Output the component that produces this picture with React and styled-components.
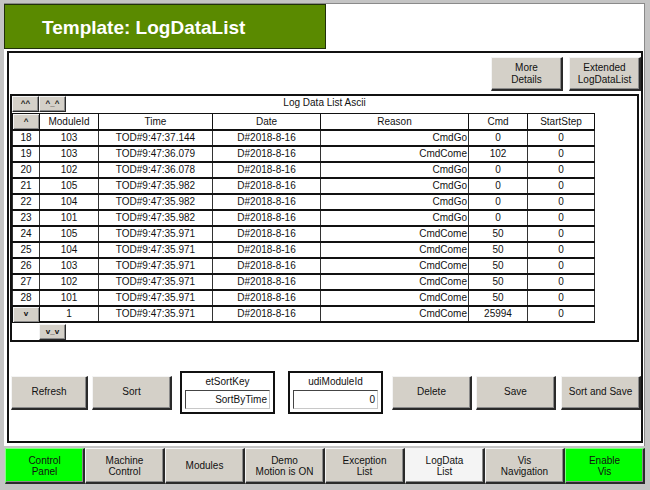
import React from 'react'
import styled, { createGlobalStyle } from 'styled-components'

const GlobalStyle = createGlobalStyle`
  html, body {
    margin: 0;
    padding: 0;
    background: #c4c4c4;
  }
  body {
    font-family: "Liberation Sans", Arial, sans-serif;
    color: #111;
  }
`

const Screen = styled.div`
  width: 650px;
  height: 490px;
  box-sizing: border-box;
  background: #c4c4c4;
  padding: 3px 5px 0 4px;
  display: flex;
  flex-direction: column;
  overflow: hidden;
`

const Workspace = styled.div`
  height: 443px;
  box-sizing: border-box;
  background: #fff;
  border-right: 1px solid #8a8a8a;
  border-top: 1px solid #8a8a8a;
  display: flex;
  flex-direction: column;
`

const Header = styled.div`
  width: 322px;
  height: 45px;
  box-sizing: border-box;
  background: #5a8a00;
  border: 1px solid #20300a;
  display: flex;
  align-items: center;
  padding: 2px 0 0 37px;
`

const Title = styled.h1`
  margin: 0;
  font-size: 19px;
  font-weight: bold;
  color: #fff;
`

const MainPanel = styled.div`
  margin: 2px 1px 0 3px;
  height: 392px;
  box-sizing: border-box;
  border: 2px solid #111;
  display: flex;
  flex-direction: column;
  padding-top: 4px;
`

const TopBar = styled.div`
  display: flex;
  justify-content: flex-end;
  gap: 6px;
`

const Button = styled.button`
  width: ${p => p.$w || 80}px;
  height: ${p => p.$h || 34}px;
  box-sizing: border-box;
  margin: 0;
  margin-left: ${p => p.$ml || 0}px;
  padding: 0;
  background: #d4d0c8;
  border-top: 1px solid #f4f4f4;
  border-left: 1px solid #f4f4f4;
  border-right: 2px solid #2a2a2a;
  border-bottom: 2px solid #2a2a2a;
  box-shadow: inset -1px -1px 0 #8a8a8a;
  font-family: "Liberation Sans", Arial, sans-serif;
  font-size: 10px;
  line-height: 12px;
  color: #111;
  text-align: center;
  flex-shrink: 0;
`

const TinyButton = styled.button`
  display: block;
  width: 27px;
  height: 16px;
  box-sizing: border-box;
  margin: 0;
  padding: 0;
  background: #d4d0c8;
  border-top: 1px solid #f4f4f4;
  border-left: 1px solid #f4f4f4;
  border-right: 1px solid #2a2a2a;
  border-bottom: 1px solid #2a2a2a;
  box-shadow: inset -1px -1px 0 #8a8a8a;
  font-family: "Liberation Sans", Arial, sans-serif;
  font-size: 8px;
  font-weight: bold;
  line-height: 14px;
  color: #111;
`

const TableFrame = styled.div`
  margin: 4px 3px 0 2px;
  border: 1px solid #111;
  box-shadow: 0 0 0 1px #111;
  display: flex;
  flex-direction: column;
  align-items: flex-start;
`

const TitleRow = styled.div`
  width: 100%;
  height: 17px;
  display: grid;
  grid-template-columns: 54px 1fr 54px;
  align-items: start;
`

const TitleButtons = styled.div`
  display: flex;
`

const ListTitle = styled.div`
  font-size: 10px;
  text-align: center;
  line-height: 12px;
  padding-top: 1px;
`

const Grid = styled.table`
  border-collapse: collapse;
  table-layout: fixed;
  width: 582px;
  font-size: 10px;
`

const HeadCell = styled.th`
  height: 15px;
  padding: 0;
  font-weight: normal;
  border: 1px solid #111;
  text-align: center;
  line-height: 14px;
`

const Cell = styled.td`
  height: 14px;
  padding: 0 ${p => (p.$align === 'right' ? '1px' : '0')} 0 0;
  border-top: 2px solid #111;
  border-left: 1px solid #333;
  border-right: 1px solid #333;
  border-bottom: 2px solid #111;
  text-align: ${p => p.$align || 'center'};
  line-height: 14px;
  white-space: nowrap;
  overflow: hidden;
`

const NavCell = styled.td`
  padding: 0;
  border: 1px solid #111;
  background: #d4d0c8;
  box-shadow: inset 1px 1px 0 #f4f4f4, inset -1px -1px 0 #8a8a8a;
  text-align: center;
  font-weight: bold;
  font-size: 8px;
  line-height: 14px;
`

const FooterRow = styled.div`
  display: flex;
  padding: 1px 0 0 27px;
`

const ActionRow = styled.div`
  flex: 1;
  display: flex;
  align-items: center;
  padding-left: 2px;
  padding-top: 3px;
`

const FieldBox = styled.div`
  width: 95px;
  height: 43px;
  box-sizing: border-box;
  margin-left: ${p => p.$ml || 0}px;
  border: 2px solid #111;
  display: flex;
  flex-direction: column;
  align-items: center;
  flex-shrink: 0;
`

const FieldLabel = styled.div`
  font-size: 10px;
  line-height: 12px;
  padding-top: 3px;
  height: 15px;
  box-sizing: border-box;
`

const FieldInput = styled.div`
  margin-top: 2px;
  width: 85px;
  height: 19px;
  box-sizing: border-box;
  border-top: 1px solid #444;
  border-left: 1px solid #444;
  border-right: 1px solid #c8c8c8;
  border-bottom: 1px solid #c8c8c8;
  font-size: 10px;
  line-height: 17px;
  text-align: right;
  padding-right: 2px;
`

const Nav = styled.div`
  display: flex;
  margin-top: 2px;
  margin-left: 1px;
  height: 36px;
`

const NavButton = styled.div`
  width: 80px;
  height: 36px;
  box-sizing: border-box;
  background: ${p => p.$bg || '#d4d0c8'};
  border-top: 1px solid ${p => (p.$bg === '#00ff00' ? '#80ff80' : '#f4f4f4')};
  border-left: 1px solid ${p => (p.$bg === '#00ff00' ? '#80ff80' : '#f4f4f4')};
  border-right: 2px solid #2a2a2a;
  border-bottom: 2px solid #2a2a2a;
  box-shadow: inset -1px -1px 0 #8a8a8a;
  display: flex;
  align-items: center;
  justify-content: center;
  text-align: center;
  font-size: 10px;
  line-height: 11px;
  color: #111;
`

const rows = [
  [18, 103, 'TOD#9:47:37.144', 'CmdGo', 0],
  [19, 103, 'TOD#9:47:36.079', 'CmdCome', 102],
  [20, 102, 'TOD#9:47:36.078', 'CmdGo', 0],
  [21, 105, 'TOD#9:47:35.982', 'CmdGo', 0],
  [22, 104, 'TOD#9:47:35.982', 'CmdGo', 0],
  [23, 101, 'TOD#9:47:35.982', 'CmdGo', 0],
  [24, 105, 'TOD#9:47:35.971', 'CmdCome', 50],
  [25, 104, 'TOD#9:47:35.971', 'CmdCome', 50],
  [26, 103, 'TOD#9:47:35.971', 'CmdCome', 50],
  [27, 102, 'TOD#9:47:35.971', 'CmdCome', 50],
  [28, 101, 'TOD#9:47:35.971', 'CmdCome', 50],
  ['v', 1, 'TOD#9:47:35.971', 'CmdCome', 25994],
]

const navItems = [
  { label: ['Control', 'Panel'], bg: '#00ff00' },
  { label: ['Machine', 'Control'] },
  { label: ['Modules'] },
  { label: ['Demo', 'Motion is ON'] },
  { label: ['Exception', 'List'] },
  { label: ['LogData', 'List'], bg: '#f4f4f4' },
  { label: ['Vis', 'Navigation'] },
  { label: ['Enable', 'Vis'], bg: '#00ff00' },
]

const widths = [27, 59, 114, 108, 148, 59, 67]

export default function App() {
  return (
    <>
      <GlobalStyle />
      <Screen>
        <Workspace>
          <Header>
            <Title>Template: LogDataList</Title>
          </Header>
          <MainPanel>
            <TopBar>
              <Button $w={72}>More<br />Details</Button>
              <Button $w={72}>Extended<br />LogDataList</Button>
            </TopBar>

            <TableFrame>
              <TitleRow>
                <TitleButtons>
                  <TinyButton>^^</TinyButton>
                  <TinyButton>^_^</TinyButton>
                </TitleButtons>
                <ListTitle>Log Data List Ascii</ListTitle>
              </TitleRow>
              <Grid>
                <colgroup>
                  {widths.map((w, i) => (
                    <col key={i} style={{ width: w }} />
                  ))}
                </colgroup>
                <thead>
                  <tr>
                    <NavCell as="th">^</NavCell>
                    <HeadCell>ModuleId</HeadCell>
                    <HeadCell>Time</HeadCell>
                    <HeadCell>Date</HeadCell>
                    <HeadCell>Reason</HeadCell>
                    <HeadCell>Cmd</HeadCell>
                    <HeadCell>StartStep</HeadCell>
                  </tr>
                </thead>
                <tbody>
                  {rows.map(([idx, mod, time, reason, cmd]) => (
                    <tr key={idx + time}>
                      {idx === 'v' ? <NavCell>v</NavCell> : <Cell>{idx}</Cell>}
                      <Cell>{mod}</Cell>
                      <Cell>{time}</Cell>
                      <Cell>D#2018-8-16</Cell>
                      <Cell $align="right">{reason}</Cell>
                      <Cell>{cmd}</Cell>
                      <Cell>0</Cell>
                    </tr>
                  ))}
                </tbody>
              </Grid>
              <FooterRow>
                <TinyButton>v_v</TinyButton>
              </FooterRow>
            </TableFrame>

            <ActionRow>
              <Button $w={77} $h={34}>Refresh</Button>
              <Button $ml={4}>Sort</Button>
              <FieldBox $ml={8}>
                <FieldLabel>etSortKey</FieldLabel>
                <FieldInput>SortByTime</FieldInput>
              </FieldBox>
              <FieldBox $ml={13}>
                <FieldLabel>udiModuleId</FieldLabel>
                <FieldInput>0</FieldInput>
              </FieldBox>
              <Button $ml={9}>Delete</Button>
              <Button $ml={4}>Save</Button>
              <Button $ml={5}>Sort and Save</Button>
            </ActionRow>
          </MainPanel>
        </Workspace>

        <Nav>
          {navItems.map(item => (
            <NavButton key={item.label.join(' ')} $bg={item.bg}>
              <span>
                {item.label.map((l, i) => (
                  <React.Fragment key={l}>
                    {i > 0 && <br />}
                    {l}
                  </React.Fragment>
                ))}
              </span>
            </NavButton>
          ))}
        </Nav>
      </Screen>
    </>
  )
}
